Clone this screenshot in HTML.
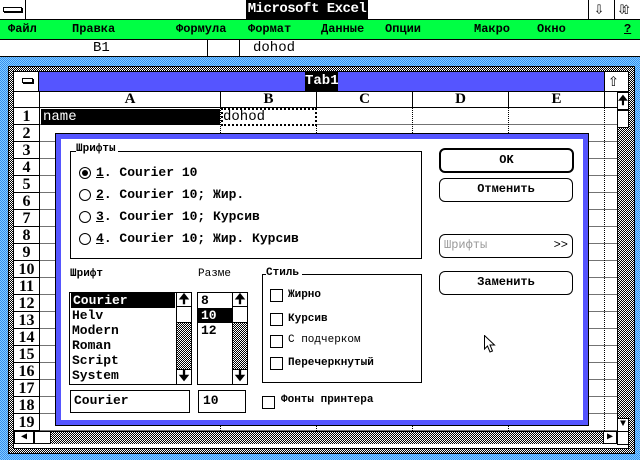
<!DOCTYPE html>
<html><head><meta charset="utf-8"><style>
*{margin:0;padding:0;box-sizing:border-box}
body{width:640px;height:460px;overflow:hidden;position:relative;background:#fff;font-family:"Liberation Mono","DejaVu Sans Mono",monospace;font-weight:bold;font-size:13px;color:#000}
.a{position:absolute}
.dg{background-image:repeating-conic-gradient(#000 0 25%,#fff 0 50%);background-size:2px 2px}
.blue{background-color:#59b4ff;background-image:repeating-conic-gradient(#3a8cf0 0 25%,#7fd0ff 0 50%);background-size:2px 2px}
.btn{position:absolute;border:1px solid #000;border-radius:6px;text-align:center;background:#fff;line-height:20px;font-size:12px}
.rh{position:absolute;left:14px;width:26px;height:17px;border-right:1px solid #000;border-bottom:1px solid #000;font-family:"Liberation Serif",serif;font-size:16px;text-align:center;line-height:17px;background:#fff}
.ch{position:absolute;top:91px;height:17px;border-right:1px solid #000;border-bottom:1px solid #000;font-family:"Liberation Serif",serif;font-size:15px;text-align:center;line-height:17px}
.rad{position:absolute;width:12px;height:12px;border:1px solid #000;border-radius:50%}
.chk{position:absolute;width:13px;height:13px;border:1px solid #000;background:#fff}
.t{position:absolute;white-space:nowrap}
.u{text-decoration:underline}
.m{font-size:12px}
</style></head><body>
<div class="a" style="left:0;top:0;width:640px;height:20px;border-bottom:1px solid #000"></div>
<div class="a" style="left:25px;top:0;width:1px;height:20px;background:#000"></div>
<div class="a" style="left:3px;top:7px;width:19px;height:5px;border:1px solid #000;box-shadow:1px 1px 0 #000"></div>
<div class="t" style="left:246px;top:0;width:122px;height:19px;background:#000;color:#fff;font-size:14px;letter-spacing:-0.5px;line-height:19px;text-align:center">Microsoft Excel</div>
<div class="a" style="left:588px;top:0;width:1px;height:20px;background:#000"></div>
<div class="a" style="left:614px;top:0;width:1px;height:20px;background:#000"></div>
<div class="t" style="left:594px;top:-1px;font-size:17px;font-weight:normal">⇩</div>
<div class="t" style="left:617px;top:-1px;font-size:17px;font-weight:normal;letter-spacing:-6px">⇩⇧</div>
<div class="a" style="left:0;top:20px;width:640px;height:20px;background:#00ff44;border-bottom:1px solid #000"></div>
<div class="t m" style="left:8px;top:22px">Файл</div>
<div class="t m" style="left:72px;top:22px">Правка</div>
<div class="t m" style="left:176px;top:22px">Формула</div>
<div class="t m" style="left:248px;top:22px">Формат</div>
<div class="t m" style="left:321px;top:22px">Данные</div>
<div class="t m" style="left:385px;top:22px">Опции</div>
<div class="t m" style="left:474px;top:22px">Макро</div>
<div class="t m" style="left:537px;top:22px">Окно</div>
<div class="t u m" style="left:624px;top:22px">?</div>
<div class="a" style="left:0;top:56px;width:640px;height:1px;background:#000"></div>
<div class="a" style="left:207px;top:40px;width:1px;height:16px;background:#000"></div>
<div class="a" style="left:239px;top:40px;width:1px;height:16px;background:#000"></div>
<div class="t" style="left:93px;top:40px;font-weight:normal;font-size:14px">B1</div>
<div class="t" style="left:253px;top:40px;font-weight:normal;font-size:14px">dohod</div>
<div class="a blue" style="left:0;top:57px;width:640px;height:403px"></div>
<div class="a dg" style="left:8px;top:66px;width:627px;height:388px;border:1px solid #000"></div>
<div class="a" style="left:13px;top:71px;width:616px;height:378px;background:#fff;border:1px solid #000"></div>
<div class="a" style="left:38px;top:71px;width:1px;height:20px;background:#000"></div>
<div class="a" style="left:22px;top:78px;width:11px;height:5px;border:1px solid #000;box-shadow:1px 1px 0 #000"></div>
<div class="a" style="left:39px;top:72px;width:565px;height:19px;background:#5555ff"></div>
<div class="t" style="left:305px;top:72px;width:33px;height:19px;background:#000;color:#fff;font-size:14px;line-height:19px;text-align:center">Tab1</div>
<div class="a" style="left:604px;top:71px;width:1px;height:20px;background:#000"></div>
<div class="t" style="left:608px;top:70px;font-size:18px;font-weight:normal">⇧</div>
<div class="a" style="left:13px;top:91px;width:616px;height:1px;background:#000"></div>
<div class="ch" style="left:14px;width:26px"></div>
<div class="ch" style="left:40px;width:181px">A</div>
<div class="ch" style="left:221px;width:96px">B</div>
<div class="ch" style="left:317px;width:96px">C</div>
<div class="ch" style="left:413px;width:96px">D</div>
<div class="ch" style="left:509px;width:96px">E</div>
<div class="ch" style="left:605px;width:12px;border-right:none"></div>
<div class="a" style="left:40px;top:108px;width:577px;height:323px;background-image:repeating-linear-gradient(to bottom,transparent 0 16px,#000 16px 17px);opacity:.55"></div>
<div class="a" style="left:220px;top:108px;width:1px;height:323px;border-left:1px dotted #000"></div>
<div class="a" style="left:316px;top:108px;width:1px;height:323px;border-left:1px dotted #000"></div>
<div class="a" style="left:412px;top:108px;width:1px;height:323px;border-left:1px dotted #000"></div>
<div class="a" style="left:508px;top:108px;width:1px;height:323px;border-left:1px dotted #000"></div>
<div class="a" style="left:604px;top:108px;width:1px;height:323px;border-left:1px dotted #000"></div>
<div class="rh" style="top:108px">1</div><div class="rh" style="top:125px">2</div><div class="rh" style="top:142px">3</div><div class="rh" style="top:159px">4</div><div class="rh" style="top:176px">5</div><div class="rh" style="top:193px">6</div><div class="rh" style="top:210px">7</div><div class="rh" style="top:227px">8</div><div class="rh" style="top:244px">9</div><div class="rh" style="top:261px">10</div><div class="rh" style="top:278px">11</div><div class="rh" style="top:295px">12</div><div class="rh" style="top:312px">13</div><div class="rh" style="top:329px">14</div><div class="rh" style="top:346px">15</div><div class="rh" style="top:363px">16</div><div class="rh" style="top:380px">17</div><div class="rh" style="top:397px">18</div><div class="rh" style="top:414px">19</div>
<div class="t" style="left:41px;top:109px;width:179px;height:16px;background:#000;color:#fff;font-weight:normal;font-size:14px;line-height:16px;padding-left:2px">name</div>
<div class="t" style="left:221px;top:108px;width:96px;height:18px;border:2px dotted #000;background:#fff;font-weight:normal;font-size:14px;line-height:14px">dohod</div>
<div class="a dg" style="left:617px;top:92px;width:12px;height:339px;border-left:1px solid #000"></div>
<div class="a" style="left:617px;top:92px;width:12px;height:18px;background:#fff;border:1px solid #000;font-size:12px;text-align:center;line-height:16px">🠉</div>
<div class="a" style="left:617px;top:110px;width:12px;height:18px;background:#fff;border:1px solid #000"></div>
<div class="a" style="left:617px;top:418px;width:12px;height:14px;background:#fff;border:1px solid #000;font-size:10px;text-align:center;line-height:12px">▼</div>
<div class="a dg" style="left:14px;top:431px;width:603px;height:13px;border-top:1px solid #000"></div>
<div class="a" style="left:14px;top:431px;width:20px;height:13px;background:#fff;border:1px solid #000;font-size:10px;text-align:center;line-height:11px">◀</div>
<div class="a" style="left:34px;top:431px;width:17px;height:13px;background:#fff;border:1px solid #000"></div>
<div class="a" style="left:603px;top:431px;width:14px;height:13px;background:#fff;border:1px solid #000;font-size:10px;text-align:center;line-height:11px">▶</div>
<div class="a" style="left:617px;top:431px;width:12px;height:14px;background:#fff;border:1px solid #000"></div>
<div class="a" style="left:55px;top:133px;width:534px;height:293px;background:#5555ff;border:1px solid #000"></div>
<div class="a" style="left:61px;top:139px;width:522px;height:281px;background:#fff"></div>
<div class="a" style="left:70px;top:151px;width:352px;height:108px;border:1px solid #000"></div>
<div class="t" style="left:76px;top:143px;background:#fff;font-size:11px;padding-right:2px">Шрифты</div>
<div class="rad" style="left:79px;top:167px"></div><div class="a" style="left:82px;top:170px;width:6px;height:6px;background:#000;border-radius:50%"></div>
<div class="rad" style="left:79px;top:189px"></div>
<div class="rad" style="left:79px;top:211px"></div>
<div class="rad" style="left:79px;top:233px"></div>
<div class="t" style="left:96px;top:165px"><span class="u">1</span>. Courier 10</div>
<div class="t" style="left:96px;top:187px"><span class="u">2</span>. Courier 10; Жир.</div>
<div class="t" style="left:96px;top:209px"><span class="u">3</span>. Courier 10; Курсив</div>
<div class="t" style="left:96px;top:231px"><span class="u">4</span>. Courier 10; Жир. Курсив</div>
<div class="btn" style="left:439px;top:148px;width:135px;height:25px;border-width:2px;line-height:21px">OK</div>
<div class="btn" style="left:439px;top:178px;width:134px;height:24px">Отменить</div>
<div class="btn" style="left:439px;top:234px;width:134px;height:24px;color:#999;text-align:left;padding-left:4px;font-weight:normal">Шрифты<span style="position:absolute;right:4px;color:#000">&gt;&gt;</span></div>
<div class="btn" style="left:439px;top:271px;width:134px;height:24px">Заменить</div>
<div class="t" style="left:70px;top:268px;font-size:11px">Шрифт</div>
<div class="t" style="left:198px;top:268px;font-size:11px;font-weight:normal">Разме</div>
<div class="a" style="left:69px;top:292px;width:123px;height:93px;border:1px solid #000"></div>
<div class="t" style="left:71px;top:293px;width:104px;height:15px;background:#000;color:#fff;line-height:15px;padding-left:2px">Courier</div>
<div class="t" style="left:72px;top:308px;line-height:15px">Helv<br>Modern<br>Roman<br>Script<br>System</div>
<div class="a dg" style="left:176px;top:292px;width:16px;height:93px;border:1px solid #000"></div>
<div class="a" style="left:176px;top:292px;width:16px;height:15px;background:#fff;border:1px solid #000;text-align:center;line-height:13px">🠉</div>
<div class="a" style="left:176px;top:306px;width:16px;height:17px;background:#fff;border:1px solid #000"></div>
<div class="a" style="left:176px;top:369px;width:16px;height:16px;background:#fff;border:1px solid #000;text-align:center;line-height:14px">🠋</div>
<div class="a" style="left:197px;top:292px;width:51px;height:93px;border:1px solid #000"></div>
<div class="t" style="left:201px;top:293px;line-height:15px">8</div>
<div class="t" style="left:198px;top:308px;width:34px;height:15px;background:#000;color:#fff;line-height:15px;padding-left:3px">10</div>
<div class="t" style="left:201px;top:323px;line-height:15px">12</div>
<div class="a dg" style="left:232px;top:292px;width:16px;height:93px;border:1px solid #000"></div>
<div class="a" style="left:232px;top:292px;width:16px;height:15px;background:#fff;border:1px solid #000;text-align:center;line-height:13px">🠉</div>
<div class="a" style="left:232px;top:306px;width:16px;height:17px;background:#fff;border:1px solid #000"></div>
<div class="a" style="left:232px;top:369px;width:16px;height:16px;background:#fff;border:1px solid #000;text-align:center;line-height:14px">🠋</div>
<div class="a" style="left:70px;top:390px;width:120px;height:23px;border:1px solid #000"></div>
<div class="t" style="left:74px;top:393px">Courier</div>
<div class="a" style="left:198px;top:390px;width:48px;height:23px;border:1px solid #000"></div>
<div class="t" style="left:203px;top:393px">10</div>
<div class="a" style="left:262px;top:274px;width:160px;height:109px;border:1px solid #000"></div>
<div class="t" style="left:266px;top:267px;background:#fff;font-size:11px;padding-right:3px">Стиль</div>
<div class="chk" style="left:270px;top:289px"></div><div class="t" style="left:288px;top:289px;font-size:11px">Жирно</div>
<div class="chk" style="left:270px;top:313px"></div><div class="t" style="left:288px;top:313px;font-size:11px">Курсив</div>
<div class="chk" style="left:270px;top:335px"></div><div class="t" style="left:288px;top:334px;font-size:11px;font-weight:normal">С подчерком</div>
<div class="chk" style="left:270px;top:357px"></div><div class="t" style="left:288px;top:357px;font-size:11px">Перечеркнутый</div>
<div class="chk" style="left:262px;top:396px"></div><div class="t" style="left:281px;top:394px;font-size:11px">Фонты принтера</div>
<svg class="a" style="left:484px;top:335px" width="14" height="22" viewBox="0 0 14 22"><path d="M0.5 0.5 L0.5 14 L3.5 11 L6 17 L8.5 16 L6 10 L10.5 10 Z" fill="#fff" stroke="#000" stroke-width="1"/></svg>
</body></html>
